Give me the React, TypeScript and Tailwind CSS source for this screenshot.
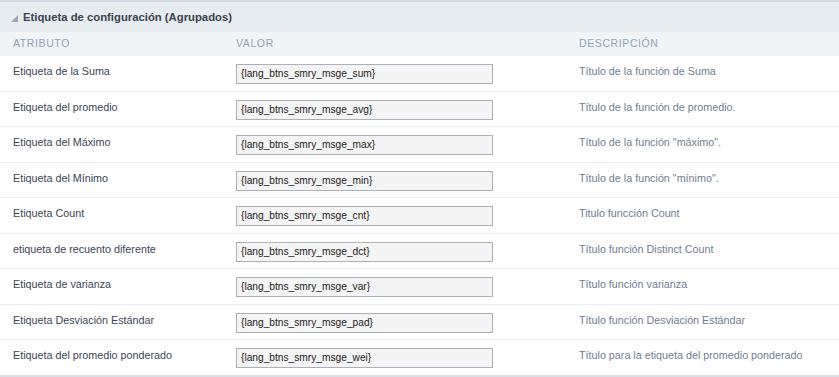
const rows = [
  ["Etiqueta de la Suma", "{lang_btns_smry_msge_sum}", "Título de la función de Suma"],
  ["Etiqueta del promedio", "{lang_btns_smry_msge_avg}", "Título de la función de promedio."],
  ["Etiqueta del Máximo", "{lang_btns_smry_msge_max}", "Título de la función \"máximo\"."],
  ["Etiqueta del Mínimo", "{lang_btns_smry_msge_min}", "Título de la función \"mínimo\"."],
  ["Etiqueta Count", "{lang_btns_smry_msge_cnt}", "Titulo funcción Count"],
  ["etiqueta de recuento diferente", "{lang_btns_smry_msge_dct}", "Título función Distinct Count"],
  ["Etiqueta de varianza", "{lang_btns_smry_msge_var}", "Título función varianza"],
  ["Etiqueta Desviación Estándar", "{lang_btns_smry_msge_pad}", "Título función Desviación Estándar"],
  ["Etiqueta del promedio ponderado", "{lang_btns_smry_msge_wei}", "Título para la etiqueta del promedio ponderado"],
];

export default function App() {
  return (
    <div className="w-[839px] h-[377px] bg-white font-['Liberation_Sans',Arial,sans-serif] text-[10.75px] overflow-hidden">
      {/* section title */}
      <div className="h-[32px] border-t-2 border-[#d3dae2] bg-[#e7ecf1] flex items-center pl-[11px]">
        <svg width="7" height="7" viewBox="0 0 7 7" className="mt-[2px]">
          <polygon points="7,0 7,7 0,7" fill="#a0a6ad" />
        </svg>
        <span className="ml-[5px] text-[11.3px] font-bold text-[#3a4350]">
          Etiqueta de configuración (Agrupados)
        </span>
      </div>

      {/* column headers */}
      <div className="h-[24px] bg-[#f1f4f7] flex items-center text-[10.5px] tracking-[0.6px] text-[#8ea4b7] uppercase">
        <div className="w-[236px] pl-[13px]">Atributo</div>
        <div className="w-[343px]">Valor</div>
        <div>Descripción</div>
      </div>

      {rows.map(([label, value, desc]) => (
        <div key={value} className="h-[35.5px] border-b border-[#e8ecf0] flex items-start">
          <div className="w-[236px] pl-[13px] pt-[7px] text-[#3c4654]">{label}</div>
          <div className="w-[343px] pt-[8px]">
            <div className="w-[257px] h-[20px] bg-[#f4f4f4] border border-[#aab1bc] flex items-center px-[4px] text-[10.2px] text-[#222]">
              {value}
            </div>
          </div>
          <div className="pt-[7px] text-[#6f7e8f]">{desc}</div>
        </div>
      ))}
      <div className="h-[2px] bg-[#d8dee5] -mt-[1px]" />
    </div>
  );
}
